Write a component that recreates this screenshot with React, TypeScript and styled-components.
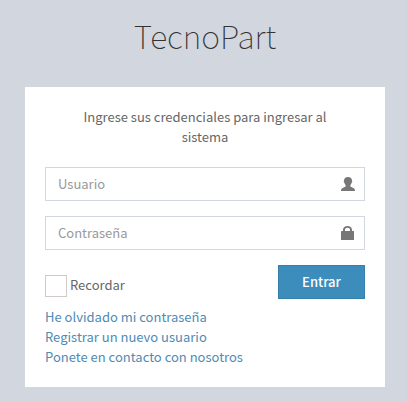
import React from "react";
import styled, { createGlobalStyle } from "styled-components";

const GlobalStyle = createGlobalStyle`
  *, *::before, *::after { box-sizing: border-box; }
  html { min-height: 100%; background: #d2d6de; }
  body {
    margin: 0;
    font-family: "Noto Sans CJK SC", "Open Sans", sans-serif;
    font-size: 13px;
    line-height: 20px;
    color: #666;
  }
  input, button { font: inherit; }
`;

const Page = styled.main`
  padding: 10px 22px 15px 25px;
`;

const Logo = styled.h1`
  margin: 0 0 27px;
  text-align: center;
  font-size: 32px;
  font-weight: 100;
  line-height: 50px;
  color: #333;
`;

const Card = styled.form`
  display: flex;
  flex-direction: column;
  padding: 20px;
  background: #fff;
`;

const Message = styled.p`
  margin: 0 0 20px;
  padding: 0 20px;
  text-align: center;
`;

const Field = styled.label`
  display: flex;
  align-items: center;
  height: 34px;
  margin-bottom: 15px;
  padding: 0 9px 0 12px;
  border: 1px solid #d2d6de;
  color: #777;
`;

const TextInput = styled.input`
  flex: 1;
  min-width: 0;
  height: 100%;
  padding: 0 0 2px;
  border: 0;
  outline: 0;
  background: transparent;
  color: #555;
  &::placeholder { color: #999; opacity: 1; }
`;

const Icon = styled.svg`
  flex: none;
  width: 14px;
  height: 14px;
  fill: currentColor;
`;

const Actions = styled.div`
  display: flex;
  justify-content: space-between;
  align-items: flex-start;
  margin-bottom: 8px;
`;

const Remember = styled.label`
  display: flex;
  align-items: flex-start;
  gap: 3px;
  padding-top: 10px;
`;

const Checkbox = styled.input`
  appearance: none;
  width: 22px;
  height: 22px;
  margin: 0;
  border: 1px solid #d0cac8;
  background: #fff;
  &:checked { background: #3c8dbc; }
`;

const Submit = styled.button`
  width: 87px;
  height: 34px;
  padding: 0;
  border: 1px solid #367fa9;
  background: #3c8dbc;
  color: #fff;
  font-weight: 500;
  cursor: pointer;
`;

const Links = styled.nav`
  display: flex;
  flex-direction: column;
  align-items: flex-start;
`;

const TextLink = styled.a`
  color: #4e8bb5;
  text-decoration: none;
  &:hover { text-decoration: underline; }
`;

export default function App() {
  return (
    <>
      <GlobalStyle />
      <Page>
        <Logo>TecnoPart</Logo>
        <Card onSubmit={(e: React.FormEvent) => e.preventDefault()}>
          <Message>Ingrese sus credenciales para ingresar al sistema</Message>
          <Field>
            <TextInput type="text" placeholder="Usuario" aria-label="Usuario" />
            <Icon viewBox="0 0 14 14" aria-hidden="true">
              <path d="M7 0C4.400 0 3 1.500 3 3.700C2.600 3.900 2.700 5.400 3.300 5.600C3.600 6.700 4 7.500 4.600 8.100V9.200C4.400 9.900 3.200 10.200 1.600 10.900C.5 11.400 0 12.200 0 14H14C14 12.200 13.500 11.400 12.400 10.900C10.800 10.200 9.600 9.900 9.400 9.200V8.100C10 7.500 10.400 6.700 10.700 5.600C11.300 5.400 11.400 3.900 11 3.700C11 1.500 9.600 0 7 0Z" />
            </Icon>
          </Field>
          <Field>
            <TextInput type="password" placeholder="Contraseña" aria-label="Contraseña" />
            <Icon viewBox="0 0 14 14" aria-hidden="true">
              <path
                fillRule="evenodd"
                d="M2 5V3.800C2 1.400 4 0 6.500 0S11 1.400 11 3.800V5H12.500Q13 5 13 5.500V13.500Q13 14 12.500 14H.5Q0 14 0 13.500V5.500Q0 5 .5 5ZM4 5H9V3.800C9 2.500 8 1.800 6.500 1.800S4 2.500 4 3.800Z"
              />
            </Icon>
          </Field>
          <Actions>
            <Remember>
              <Checkbox type="checkbox" />
              Recordar
            </Remember>
            <Submit type="submit">Entrar</Submit>
          </Actions>
          <Links>
            <TextLink href="#olvidado">He olvidado mi contraseña</TextLink>
            <TextLink href="#registro">Registrar un nuevo usuario</TextLink>
            <TextLink href="#contacto">Ponete en contacto con nosotros</TextLink>
          </Links>
        </Card>
      </Page>
    </>
  );
}
